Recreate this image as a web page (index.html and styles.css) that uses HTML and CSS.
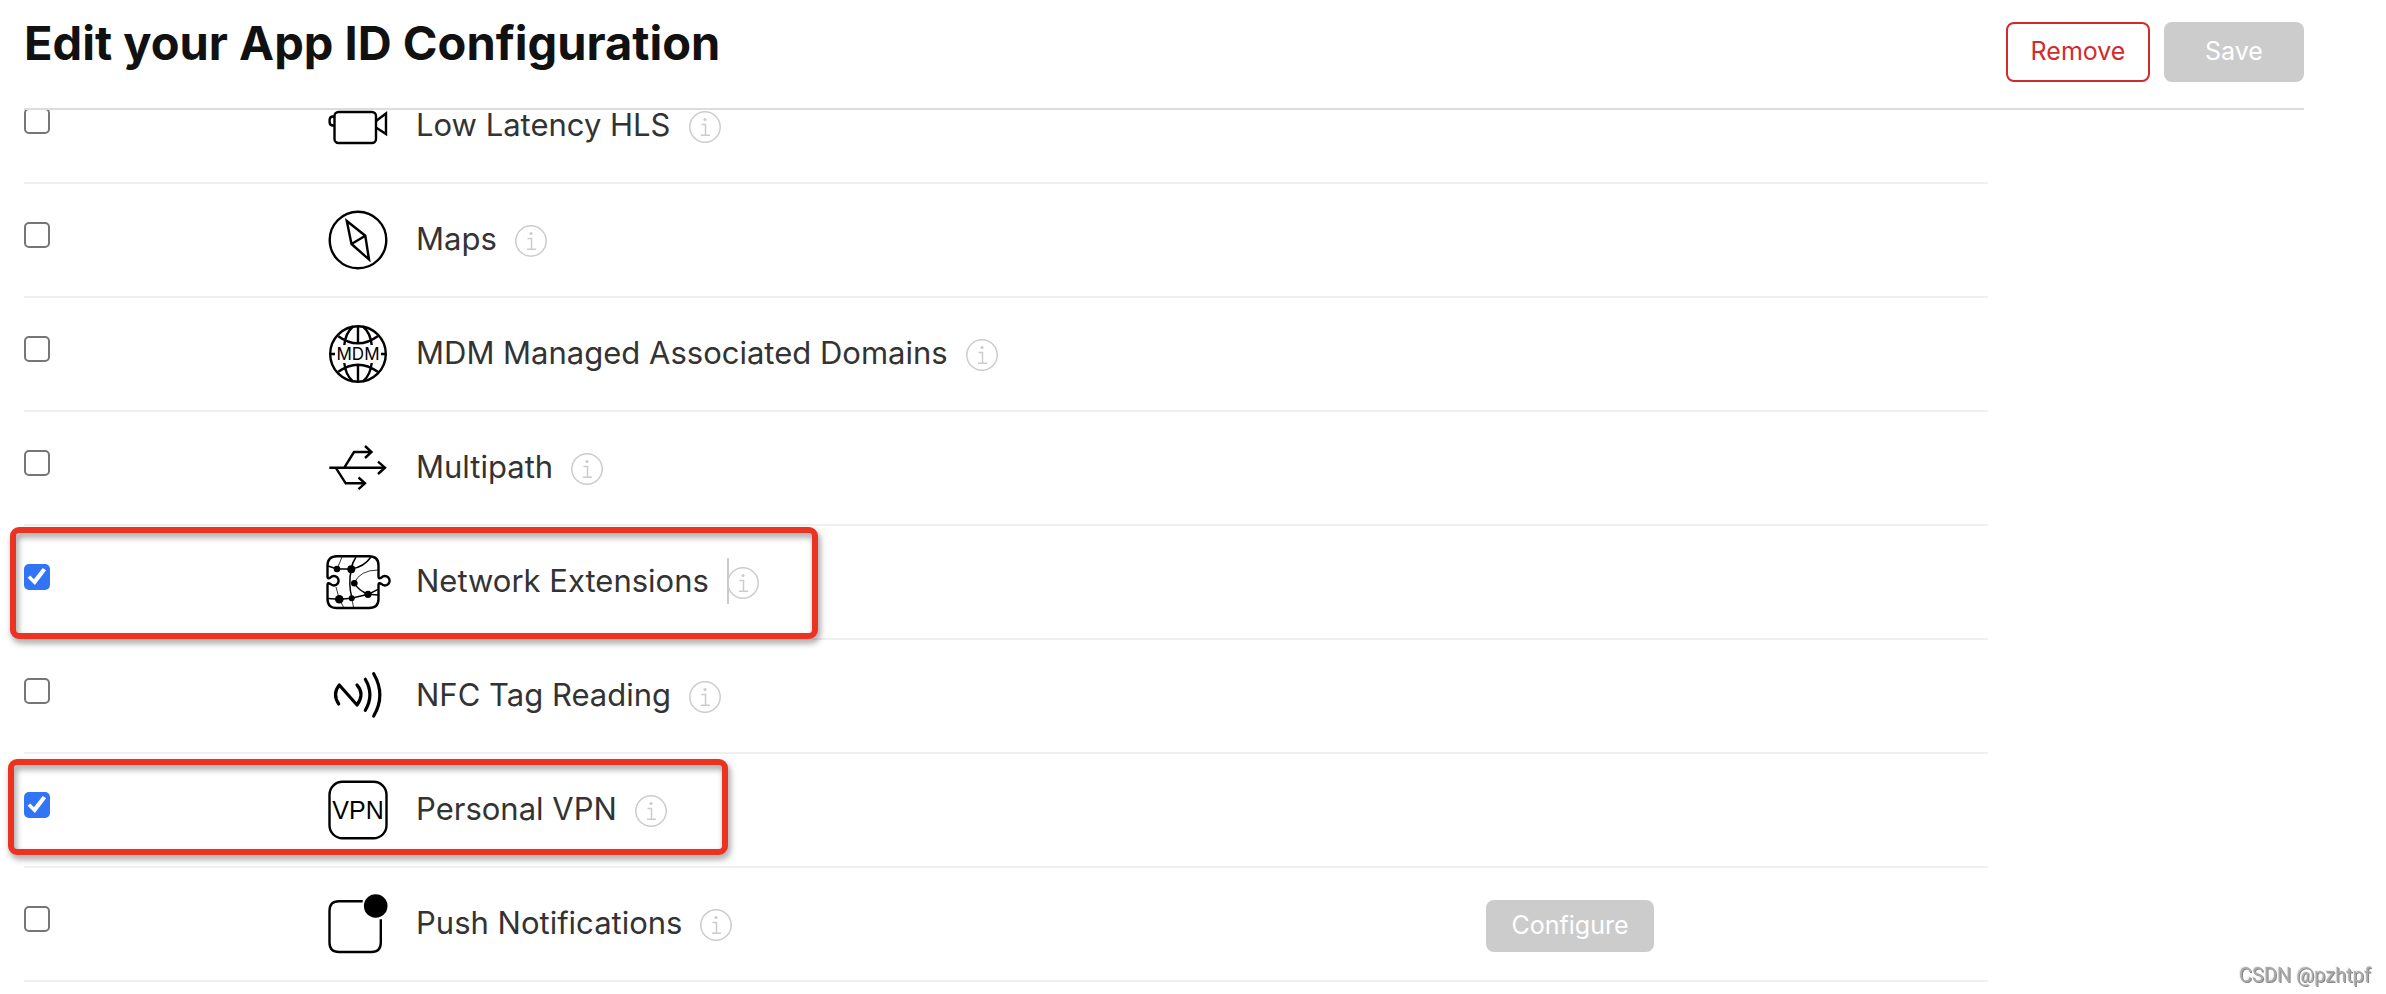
FILE: index.html
```html
<!DOCTYPE html>
<html lang="en">
<head>
    <meta charset="utf-8">
    <title>Edit your App ID Configuration</title>
    <link rel="stylesheet" href="styles.css">
</head>
<body>
    <svg class="defs" width="0" height="0">
        <symbol id="info" viewBox="0 0 32 32">
            <circle cx="16" cy="16" r="15.2"/>
            <path d="M12.5 13.5h4V24M12 24.2h9"/>
            <circle class="dot" cx="16" cy="8.5" r="1.6"/>
        </symbol>
    </svg>

    <div class="page">
        <header class="header">
            <h1>Edit your App ID Configuration</h1>
            <div class="actions">
                <button class="btn btn-remove">Remove</button>
                <button class="btn btn-save" disabled>Save</button>
            </div>
        </header>

        <ul class="capabilities">
            <li class="row">
                <input type="checkbox" id="hls">
                <svg class="icon" viewBox="0 0 64 64">
                    <rect x="8.5" y="18" width="41.5" height="31" rx="4"/>
                    <path d="M8.5 22.5H7Q3.6 22.5 3.6 26v2Q3.6 31.5 7 31.5h1.5M50 27l10-7.5v20.5L50 33.5"/>
                </svg>
                <div class="name">
                    <label for="hls">Low Latency HLS</label>
                    <button class="info" aria-label="About Low Latency HLS"><svg><use href="#info"/></svg></button>
                </div>
            </li>
            <li class="row">
                <input type="checkbox" id="maps">
                <svg class="icon" viewBox="0 0 64 64">
                    <circle cx="32" cy="32" r="28.3"/>
                    <path d="M20.8 13l18.5 14.7L43 51.5 25.5 36zM39.3 27.7L25.5 36"/>
                </svg>
                <div class="name">
                    <label for="maps">Maps</label>
                    <button class="info" aria-label="About Maps"><svg><use href="#info"/></svg></button>
                </div>
            </li>
            <li class="row">
                <input type="checkbox" id="mdm">
                <svg class="icon" viewBox="0 0 64 64">
                    <circle cx="32" cy="32" r="27.8"/>
                    <path d="M12.3 14.2Q32 28.5 51.7 14.2M12.3 49.8Q32 35.5 51.7 49.8M32 4v18M32 42v18M27 4.5Q19.5 11 18.3 23M37 4.5Q44.5 11 45.7 23M27 59.5Q19.5 53 18.3 41M37 59.5Q44.5 53 45.7 41M4 32h5M55 32h5"/>
                    <text class="mdm" x="32" y="38">MDM</text>
                </svg>
                <div class="name">
                    <label for="mdm">MDM Managed Associated Domains</label>
                    <button class="info" aria-label="About MDM Managed Associated Domains"><svg><use href="#info"/></svg></button>
                </div>
            </li>
            <li class="row">
                <input type="checkbox" id="multipath">
                <svg class="icon" viewBox="0 0 64 64">
                    <path d="M3.3 31.7H59M52 25.7l7 6-7 6.3M18.3 31.7L28 16h17.5M39 10l6.5 6-6.5 6M9.7 31.7l10 15.6h19M32.5 41.5l6.5 5.8-6.5 5.9"/>
                </svg>
                <div class="name">
                    <label for="multipath">Multipath</label>
                    <button class="info" aria-label="About Multipath"><svg><use href="#info"/></svg></button>
                </div>
            </li>
            <li class="row">
                <input type="checkbox" id="network" checked>
                <svg class="icon" viewBox="0 0 64 64">
                    <path d="M11 6.3H43Q52.5 6.3 52.5 15.5V26.5q0 3 3 1a4.7 4.7 0 1 1 0 6.5q-3-2-3 1V49Q52.5 58 43 58H11Q1.5 58 1.5 49V35q0-3 3-1a4.7 4.7 0 1 0 0-6.5q-3 2-3-1V15.5Q1.5 6.3 11 6.3z"/>
                    <path class="mid" d="M2 16l9 3h14.3Q26 13 30 7M25.3 19Q38 17 45 7M25.3 19Q22 35 26 48M28.3 33Q32 40 42 44.3l10-5M42 44.3l10 .7M42 44.3L25.7 48.3l-12.4 1L2 48.5"/>
                    <path class="thin" d="M11 19l5-12M28.3 33Q34 20 52 20M10 37l3.3 12L18 58M25.7 48l2 10"/>
                    <g class="fill">
                        <circle cx="11" cy="19" r="3.3"/>
                        <circle cx="25.3" cy="19.3" r="4"/>
                        <circle cx="28.3" cy="33.3" r="3.3"/>
                        <circle cx="42" cy="44.3" r="3.6"/>
                        <circle cx="13.3" cy="49.3" r="4.3"/>
                        <circle cx="25.7" cy="48.3" r="3"/>
                    </g>
                </svg>
                <div class="name">
                    <label for="network">Network Extensions</label>
                    <button class="info caret" aria-label="About Network Extensions"><svg><use href="#info"/></svg></button>
                </div>
                <div class="mark mark-network"></div>
            </li>
            <li class="row">
                <input type="checkbox" id="nfc">
                <svg class="icon" viewBox="0 0 64 64">
                    <path class="bold" d="M12.7 40Q6 30 13.3 21L31 41Q39 30 31 21M39.3 15.3Q48.500 31 39.3 46.3M47.7 9.7Q60 31 47.7 52"/>
                </svg>
                <div class="name">
                    <label for="nfc">NFC Tag Reading</label>
                    <button class="info" aria-label="About NFC Tag Reading"><svg><use href="#info"/></svg></button>
                </div>
            </li>
            <li class="row">
                <input type="checkbox" id="vpn" checked>
                <svg class="icon" viewBox="0 0 64 64">
                    <rect x="3.5" y="3.8" width="57" height="56.5" rx="13"/>
                    <text class="vpn" x="32" y="41">VPN</text>
                </svg>
                <div class="name">
                    <label for="vpn">Personal VPN</label>
                    <button class="info" aria-label="About Personal VPN"><svg><use href="#info"/></svg></button>
                </div>
                <div class="mark mark-vpn"></div>
            </li>
            <li class="row">
                <input type="checkbox" id="push">
                <svg class="icon" viewBox="0 0 64 64">
                    <path d="M36.7 9.3H13Q3.5 9.3 3.5 19V50.5Q3.5 60 13 60H45.5Q54.8 60 54.8 50.5V27.3"/>
                    <circle class="fill" cx="49.7" cy="14" r="11.8"/>
                </svg>
                <div class="name">
                    <label for="push">Push Notifications</label>
                    <button class="info" aria-label="About Push Notifications"><svg><use href="#info"/></svg></button>
                </div>
                <div class="configure">
                    <button class="btn btn-configure" disabled>Configure</button>
                </div>
            </li>
        </ul>
    </div>
    <div class="watermark">CSDN @pzhtpf</div>
</body>
</html>
```

FILE: styles.css
```css
* {
    box-sizing: border-box;
}
body {
    margin: 0;
    font-family: Inter, "Liberation Sans", sans-serif;
    color: #333;
    background: #fff;
    height: 100vh;
    overflow: hidden;
}
.defs {
    position: absolute;
}
.page {
    padding: 0 82px 0 24px;
}
.header {
    position: relative;
    z-index: 2;
    display: flex;
    justify-content: space-between;
    align-items: flex-start;
    height: 110px;
    padding-top: 22px;
    background: #fff;
    border-bottom: 2px solid #ddd;
}
h1 {
    margin: 0;
    color: #111;
    font-size: 47px;
    line-height: 42px;
    font-weight: 700;
}
.actions {
    display: flex;
    gap: 14px;
}
.btn {
    height: 60px;
    border: 0;
    border-radius: 8px;
    font-family: inherit;
    font-size: 25px;
    padding: 0 0 2px;
}
.btn-remove {
    width: 144px;
    background: #fff;
    border: 2px solid #d32b2b;
    color: #d32b2b;
}
.btn-save {
    width: 140px;
    background: #ccc;
    color: #fff;
}
.btn-configure {
    width: 168px;
    height: 52px;
    background: #ccc;
    color: #fff;
}

/* the list is scrolled a little way under the header */
.capabilities {
    list-style: none;
    margin: -40px 0 0;
    padding: 0 316px 0 0;
}
.row {
    position: relative;
    display: grid;
    grid-template-columns: 302px 90px 1fr 502px;
    align-items: center;
    height: 114px;
    border-bottom: 2px solid #f0f0f0;
}
.row input {
    appearance: none;
    align-self: start;
    width: 26px;
    height: 26px;
    margin: 38px 0 0;
    border: 2px solid #767676;
    border-radius: 5px;
    background: #fff;
}
.row input:checked {
    border: 0;
    background: #3174f6;
}
.row input:checked::before {
    content: "";
    display: block;
    width: 26px;
    height: 26px;
    background: #fff;
    clip-path: polygon(14% 53%, 24% 44%, 38% 59%, 72% 15%, 85% 24%, 42% 81%);
}
.icon {
    width: 64px;
    height: 64px;
    fill: none;
    stroke: #000;
    stroke-width: 2.4;
    overflow: visible;
}
.icon .mid {
    stroke-width: 1.5;
}
.icon .thin {
    stroke-width: 0.8;
}
.icon .bold {
    stroke-width: 3.2;
    stroke-linecap: round;
    stroke-linejoin: round;
}
.icon .fill {
    fill: #000;
    stroke: none;
}
.icon text {
    fill: #000;
    stroke: none;
    text-anchor: middle;
}
.mdm {
    font-size: 17px;
    font-weight: 400;
}
.vpn {
    font-family: "Liberation Sans", sans-serif;
    font-size: 25px;
}
.name {
    display: flex;
    align-items: center;
    gap: 18px;
    font-size: 31px;
    line-height: 46px;
    white-space: nowrap;
}
.name label {
    padding-bottom: 2px;
}
.info {
    position: relative;
    width: 32px;
    height: 32px;
    margin-top: 2px;
    padding: 0;
    border: 0;
    background: none;
}
.info svg {
    display: block;
    width: 32px;
    height: 32px;
    fill: none;
    stroke: #ccc;
    stroke-width: 1.5;
}
.dot {
    fill: #ccc;
    stroke: none;
}
.caret::before {
    content: "";
    position: absolute;
    left: 0;
    top: -9px;
    width: 2px;
    height: 46px;
    background: #ccc;
}
.configure {
    padding-top: 4px;
}
.mark {
    position: absolute;
    border: 6px solid #eb3323;
    border-radius: 9px;
    filter: drop-shadow(2px 4px 3px rgba(0, 0, 0, 0.4));
    pointer-events: none;
}
.mark-network {
    left: -14px;
    top: 1px;
    width: 808px;
    height: 112px;
}
.mark-vpn {
    left: -16px;
    top: 5px;
    width: 720px;
    height: 96px;
}
.watermark {
    position: fixed;
    right: 15px;
    bottom: 6px;
    color: #aaa;
    text-shadow: 1px 1px 0 #888, -1px -1px 0 #eee;
    font-family: Roboto, "Liberation Sans", sans-serif;
    font-size: 20px;
    line-height: 26px;
}
```
